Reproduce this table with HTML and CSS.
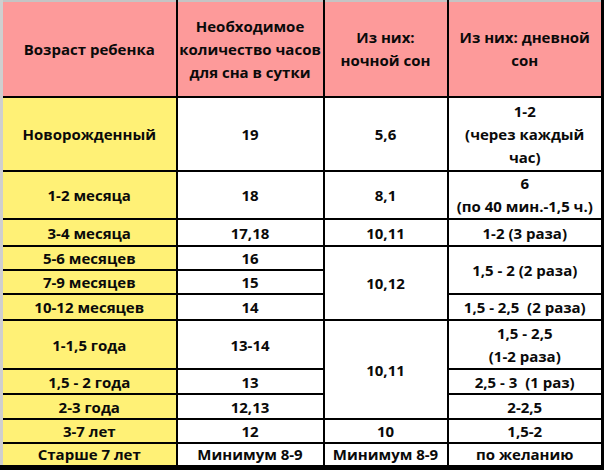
FILE: index.html
```html
<!DOCTYPE html>
<html lang="ru">
<head>
<meta charset="utf-8">
<title>Сон ребенка</title>
<link rel="stylesheet" href="styles.css">
</head>
<body>
<table class="sleep">
  <colgroup>
    <col class="c1"><col class="c2"><col class="c3"><col class="c4">
  </colgroup>
  <thead>
    <tr class="h-head">
      <th>Возраст ребенка</th>
      <th class="multi">Необходимое<br>количество часов<br>для сна в сутки</th>
      <th class="multi">Из них:<br>ночной сон</th>
      <th class="multi">Из них: дневной<br>сон</th>
    </tr>
  </thead>
  <tbody>
    <tr class="h74">
      <td class="age">Новорожденный</td>
      <td>19</td>
      <td>5,6</td>
      <td class="multi">1-2<br>(через каждый<br>час)</td>
    </tr>
    <tr class="h48">
      <td class="age">1-2 месяца</td>
      <td>18</td>
      <td>8,1</td>
      <td class="multi">6<br>(по 40 мин.-1,5 ч.)</td>
    </tr>
    <tr class="h27">
      <td class="age">3-4 месяца</td>
      <td>17,18</td>
      <td>10,11</td>
      <td>1-2 (3 раза)</td>
    </tr>
    <tr class="h24">
      <td class="age">5-6 месяцев</td>
      <td>16</td>
      <td rowspan="3">10,12</td>
      <td rowspan="2">1,5 - 2 (2 раза)</td>
    </tr>
    <tr class="h24">
      <td class="age">7-9 месяцев</td>
      <td>15</td>
    </tr>
    <tr class="h26">
      <td class="age">10-12 месяцев</td>
      <td>14</td>
      <td>1,5 - 2,5 &nbsp;(2 раза)</td>
    </tr>
    <tr class="h49">
      <td class="age">1-1,5 года</td>
      <td>13-14</td>
      <td rowspan="3">10,11</td>
      <td class="multi">1,5 - 2,5<br>(1-2 раза)</td>
    </tr>
    <tr class="h25">
      <td class="age">1,5 - 2 года</td>
      <td>13</td>
      <td>2,5 - 3 &nbsp;(1 раз)</td>
    </tr>
    <tr class="h25">
      <td class="age">2-3 года</td>
      <td>12,13</td>
      <td>2-2,5</td>
    </tr>
    <tr class="h24">
      <td class="age">3-7 лет</td>
      <td>12</td>
      <td>10</td>
      <td>1,5-2</td>
    </tr>
    <tr class="h24">
      <td class="age">Старше 7 лет</td>
      <td>Минимум 8-9</td>
      <td>Минимум 8-9</td>
      <td>по желанию</td>
    </tr>
  </tbody>
</table>
</body>
</html>
```

FILE: styles.css
```css
html, body {
  margin: 0;
  padding: 0;
  background: #ffffff;
  overflow: hidden;
}

.sleep {
  border-collapse: collapse;
  table-layout: fixed;
  width: 604px;
  font-family: "Open Sans", "Noto Sans", sans-serif;
  font-weight: 700;
  font-size: 15px;
  line-height: 18px;
  color: #0a0a0a;
  border-top: 2px solid #c4c4c4;
  border-left: 3px solid #cfcfcf;
  border-right: 3px solid #000000;
  border-bottom: 5px solid #000000;
}

.c1 { width: 175px; }
.c2 { width: 147px; }
.c3 { width: 124px; }
.c4 { width: 155px; }

.sleep th,
.sleep td {
  border: 2px solid #000000;
  padding: 0;
  text-align: center;
  vertical-align: middle;
  background: #ffffff;
  overflow: hidden;
  white-space: nowrap;
}

.sleep .multi {
  line-height: 23px;
}

.sleep th {
  background: #fd9a9a;
  font-weight: 700;
  border-top: 2px solid #c4c4c4;
}

.sleep th:first-child,
.sleep td.age {
  border-left: 3px solid #cfcfcf;
}

.sleep td.age {
  background: #fff176;
}

.h-head { height: 96px; }
.h74 { height: 74px; }
.h48 { height: 48px; }
.h27 { height: 27px; }
.h26 { height: 26px; }
.h25 { height: 25px; }
.h24 { height: 24px; }
.h49 { height: 49px; }
```
